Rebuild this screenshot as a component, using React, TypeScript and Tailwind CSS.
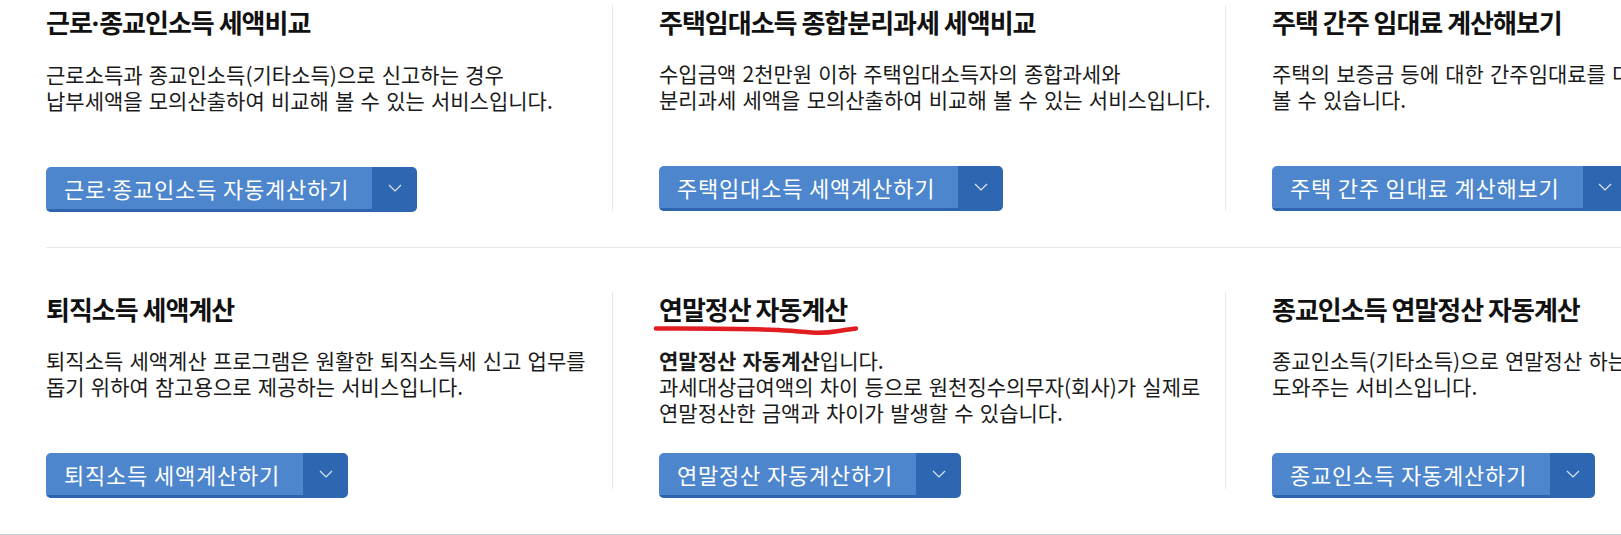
import React from 'react';

interface Service {
  title: React.ReactNode;
  lines: React.ReactNode[];
  button: React.ReactNode;
  marked?: boolean;
}

// the CJK font draws the middle dot full-width; the page shows a narrow one
const Dot = () => <span className="font-['Noto_Sans',sans-serif] tracking-normal">·</span>;

const topRow: Service[] = [
  {
    title: <>근로<Dot />종교인소득 세액비교</>,
    lines: ['근로소득과 종교인소득(기타소득)으로 신고하는 경우', '납부세액을 모의산출하여 비교해 볼 수 있는 서비스입니다.'],
    button: <>근로<Dot />종교인소득 자동계산하기</>,
  },
  {
    title: '주택임대소득 종합분리과세 세액비교',
    lines: ['수입금액 2천만원 이하 주택임대소득자의 종합과세와', '분리과세 세액을 모의산출하여 비교해 볼 수 있는 서비스입니다.'],
    button: '주택임대소득 세액계산하기',
  },
  {
    title: '주택 간주 임대료 계산해보기',
    lines: ['주택의 보증금 등에 대한 간주임대료를 대략적으로 계산해', '볼 수 있습니다.'],
    button: '주택 간주 임대료 계산해보기',
  },
];

const bottomRow: Service[] = [
  {
    title: '퇴직소득 세액계산',
    lines: ['퇴직소득 세액계산 프로그램은 원활한 퇴직소득세 신고 업무를', '돕기 위하여 참고용으로 제공하는 서비스입니다.'],
    button: '퇴직소득 세액계산하기',
  },
  {
    title: '연말정산 자동계산',
    lines: [
      <>
        <b className="font-bold">연말정산 자동계산</b>입니다.
      </>,
      '과세대상급여액의 차이 등으로 원천징수의무자(회사)가 실제로',
      '연말정산한 금액과 차이가 발생할 수 있습니다.',
    ],
    button: '연말정산 자동계산하기',
    marked: true,
  },
  {
    title: '종교인소득 연말정산 자동계산',
    lines: ['종교인소득(기타소득)으로 연말정산 하는 원천징수의무자를', '도와주는 서비스입니다.'],
    button: '종교인소득 자동계산하기',
  },
];

const CalcButton: React.FC<{ label: React.ReactNode }> = ({ label }) => (
  <div className="inline-flex h-[45px] rounded-[5px] overflow-hidden">
    <span className="flex items-center pl-[18px] pr-[23px] bg-[#4d86cc] border-b-[3px] border-[#2c64ad] text-white text-[22px] tracking-[0.8px] leading-none whitespace-nowrap">
      {label}
    </span>
    <span className="flex items-center justify-center w-[45px] bg-[#2d67b1] pb-[3px]">
      <svg width="14" height="8" viewBox="0 0 14 8" fill="none">
        <polyline points="1,1 7,7 13,1" stroke="#dce6f4" strokeWidth="1.2" />
      </svg>
    </span>
  </div>
);

const ServiceRow: React.FC<{ items: Service[]; height: string }> = ({ items, height }) => (
  <ul className="flex">
    {items.map((item, i) => (
      <li
        key={i}
        className={`shrink-0 ${height} ${i === 0 ? 'w-[566px]' : 'w-[613px] pl-[46px] border-l border-[#e8e8e8]'}`}
      >
        <h3 className="relative inline-block text-[26px] leading-[34px] font-bold tracking-[-1px] text-[#111] whitespace-nowrap">
          {item.title}
          {item.marked && (
            <svg className="absolute left-[-8px] top-[32px]" width="212" height="14" viewBox="0 0 212 14" fill="none">
              <path
                d="M5 4.5 C50 4.3 110 4.8 140 6.8 C160 8.8 172 9.6 186 7.2 C196 5.6 202 4.6 205 4.4"
                stroke="#e11d22"
                strokeWidth="4.5"
                strokeLinecap="round"
              />
            </svg>
          )}
        </h3>
        <p className="mt-[21px] h-[78px] text-[21px] leading-[26px] [word-spacing:1.5px] text-[#1a1a1a] whitespace-nowrap">
          {item.lines.map((line, j) => (
            <React.Fragment key={j}>
              {j > 0 && <br />}
              {line}
            </React.Fragment>
          ))}
        </p>
        <div className="mt-[28px]">
          <CalcButton label={item.button} />
        </div>
      </li>
    ))}
  </ul>
);

export default function App() {
  return (
    <div className="relative w-full h-[535px] overflow-hidden bg-white border-b border-[#c3d0d8] font-['Noto_Sans_CJK_KR','Noto_Sans',sans-serif]">
      <div className="ml-[46px] pt-[5px]">
        <ServiceRow items={topRow} height="h-[206px]" />
        <div className="mt-[36px] border-t border-[#e8e8e8]" />
        <div className="mt-[44px]">
          <ServiceRow items={bottomRow} height="h-[197px]" />
        </div>
      </div>
    </div>
  );
}
